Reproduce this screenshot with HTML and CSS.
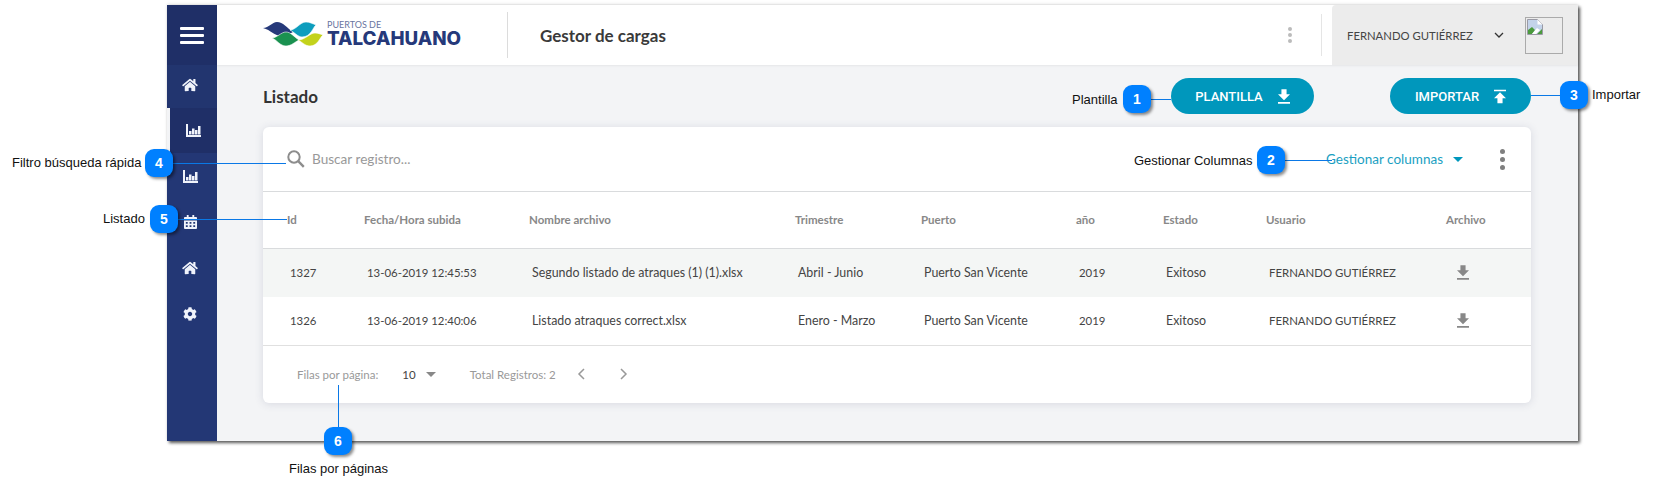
FILE: index.html
```html
<!DOCTYPE html>
<html>
<head>
    <meta charset="utf-8">
    <title>Gestor de cargas</title>
    <link rel="stylesheet" href="styles.css">
</head>
<body>
    <svg class="sprite" width="0" height="0">
        <symbol id="i-home" viewBox="0 0 576 512"><path d="M280.37 148.26L96 300.11V464a16 16 0 0 0 16 16l112.06-.29a16 16 0 0 0 15.92-16V368a16 16 0 0 1 16-16h64a16 16 0 0 1 16 16v95.64a16 16 0 0 0 16 16.05L464 480a16 16 0 0 0 16-16V300L295.67 148.26a12.19 12.19 0 0 0-15.3 0zM571.6 251.47L488 182.56V44.05a12 12 0 0 0-12-12h-56a12 12 0 0 0-12 12v72.61L318.47 43a48 48 0 0 0-61 0L4.34 251.47a12 12 0 0 0-1.6 16.9l25.5 31A12 12 0 0 0 45.15 301l235.22-193.74a12.19 12.19 0 0 1 15.3 0L530.9 301a12 12 0 0 0 16.9-1.6l25.5-31a12 12 0 0 0-1.7-16.93z"/></symbol>
        <symbol id="i-chart" viewBox="0 0 15 13"><path d="M0 0h2v11h13v2H0zM3 7h2.500v3.500H3zM6 4.500h2.500v6H6zM9 6h2.500v4.500H9zM12 2h2.500v8.500H12z"/></symbol>
        <symbol id="i-cal" viewBox="0 0 14 15"><path d="M3 0h2v2h4V0h2v2h2a1 1 0 0 1 1 1v2H0V3a1 1 0 0 1 1-1h2zM0 6h14v8a1 1 0 0 1-1 1H1a1 1 0 0 1-1-1zm2 1.5v2h2v-2zm4 0v2h2v-2zm4 0v2h2v-2zm-8 3.5v2h2v-2zm4 0v2h2v-2zm4 0v2h2v-2z" fill-rule="evenodd"/></symbol>
        <symbol id="i-gear" viewBox="0 0 512 512"><path d="M487.4 315.7l-42.6-24.6c4.3-23.2 4.3-47 0-70.2l42.6-24.6c4.9-2.8 7.1-8.6 5.5-14-11.1-35.6-30-67.8-54.7-94.6-3.8-4.1-10-5.1-14.8-2.3L380.8 110c-17.9-15.4-38.5-27.3-60.8-35.1V25.8c0-5.6-3.9-10.5-9.4-11.7-36.7-8.2-74.3-7.8-109.2 0-5.5 1.2-9.4 6.1-9.4 11.7V75c-22.2 7.9-42.8 19.8-60.8 35.1L88.7 85.5c-4.9-2.8-11-1.9-14.8 2.3-24.7 26.7-43.6 58.9-54.7 94.6-1.7 5.4.6 11.2 5.5 14L67.3 221c-4.3 23.2-4.3 47 0 70.2l-42.6 24.6c-4.9 2.8-7.1 8.6-5.5 14 11.1 35.6 30 67.8 54.7 94.6 3.8 4.1 10 5.1 14.8 2.3l42.6-24.6c17.9 15.4 38.5 27.3 60.8 35.1v49.2c0 5.6 3.9 10.5 9.4 11.7 36.7 8.2 74.3 7.8 109.2 0 5.5-1.2 9.4-6.1 9.4-11.7v-49.2c22.2-7.9 42.8-19.8 60.8-35.1l42.6 24.6c4.9 2.8 11 1.9 14.8-2.3 24.7-26.7 43.6-58.9 54.7-94.6 1.5-5.5-.7-11.3-5.6-14.1zM256 336c-44.1 0-80-35.9-80-80s35.9-80 80-80 80 35.9 80 80-35.9 80-80 80z"/></symbol>
        <symbol id="i-down" viewBox="5 3 14 17"><path d="M19 9h-4V3H9v6H5l7 7 7-7zM5 18v2h14v-2H5z"/></symbol>
        <symbol id="i-up" viewBox="5 4 14 16"><path d="M5 4v2h14V4H5zm0 10h4v6h6v-6h4l-7-7-7 7z"/></symbol>
    </svg>

    <div class="app">
        <nav class="sidebar">
            <div class="menu-btn"><span></span><span></span><span></span></div>
            <a class="nav-item nav-home"><svg class="ico-home"><use href="#i-home"/></svg></a>
            <a class="nav-item nav-active"><svg class="ico-chart"><use href="#i-chart"/></svg></a>
            <a class="nav-item"><svg class="ico-chart"><use href="#i-chart"/></svg></a>
            <a class="nav-item"><svg class="ico-cal"><use href="#i-cal"/></svg></a>
            <a class="nav-item"><svg class="ico-home"><use href="#i-home"/></svg></a>
            <a class="nav-item"><svg class="ico-gear"><use href="#i-gear"/></svg></a>
        </nav>

        <div class="main">
            <header class="topbar">
                <div class="logo">
                    <svg class="logo-waves" viewBox="0 0 62 26">
                        <path fill="#26397a" d="M0 8C6 8 9 2 14 2C20 2 24 8 30 12C26 14 23 16 19 16C11 16 8 10 0 8z"/>
                        <path fill="#0d9dbd" stroke="#fff" stroke-width=".6" d="M27 10C33 10 37 2 43 2C47 2 50 4 53 5C50 7 48 17 39 17C35 17 31 12 27 10z"/>
                        <path fill="#1a9150" stroke="#fff" stroke-width=".6" d="M9 18C14 18 18 12 23 12C28 12 31 17 36 20C32 22 28 26 23 26C17 26 14 20 9 18z"/>
                        <path fill="#c3d21b" stroke="#fff" stroke-width=".6" d="M35 20C42 20 47 13 52 13C55 13 57 14 60 15C57 17 55 26 47 26C42 26 39 22 35 20z"/>
                    </svg>
                    <div class="logo-text">
                        <span class="logo-small">PUERTOS DE</span>
                        <span class="logo-big">TALCAHUANO</span>
                    </div>
                </div>
                <div class="app-title">Gestor de cargas</div>
                <div class="top-kebab"><span></span><span></span><span></span></div>
                <div class="top-sep"></div>
                <div class="user-box">
                    <span class="user-name">FERNANDO GUTIÉRREZ</span>
                    <svg class="user-chevron" viewBox="0 0 10 6"><path d="M1 1l4 4 4-4" fill="none" stroke="#333" stroke-width="1.3"/></svg>
                    <div class="avatar">
                        <svg class="broken-img" viewBox="0 0 16 16">
                            <path fill="#c3d3ea" stroke="#9a9aa5" stroke-width="1" d="M.5.5h10l5 5v10H.5z"/>
                            <path fill="#4b9a3d" d="M1 15V11l4-3 3 3-3 4zM10 15l5-5v5z"/>
                            <path fill="#fff" d="M5 15l5-6 3 2-4 4zM10.500.5v5h5z"/>
                        </svg>
                    </div>
                </div>
            </header>

            <section class="content">
                <div class="page-head">
                    <h1 class="page-title">Listado</h1>
                    <button class="btn btn-plantilla">PLANTILLA <svg class="btn-ico"><use href="#i-down"/></svg></button>
                    <button class="btn btn-importar">IMPORTAR <svg class="btn-ico"><use href="#i-up"/></svg></button>
                </div>

                <div class="card">
                    <div class="toolbar">
                        <svg class="search-ico" viewBox="0 0 18 18"><circle cx="7" cy="7" r="5.7" fill="none" stroke="#8d8d8d" stroke-width="2"/><path d="M11.200 11.200l5.600 5.600" stroke="#8d8d8d" stroke-width="2.400"/></svg>
                        <span class="search-text">Buscar registro...</span>
                        <span class="columns-link">Gestionar columnas</span>
                        <span class="columns-caret"></span>
                        <div class="card-kebab"><span></span><span></span><span></span></div>
                    </div>

                    <table class="grid">
                        <colgroup>
                            <col class="c-id"><col class="c-date"><col class="c-file"><col class="c-trim"><col class="c-port"><col class="c-year"><col class="c-state"><col class="c-user"><col class="c-arch">
                        </colgroup>
                        <thead>
                            <tr>
                                <th>Id</th><th>Fecha/Hora subida</th><th>Nombre archivo</th><th>Trimestre</th><th>Puerto</th><th>año</th><th>Estado</th><th>Usuario</th><th>Archivo</th>
                            </tr>
                        </thead>
                        <tbody>
                            <tr class="row-alt">
                                <td class="tight">1327</td><td class="tight">13-06-2019 12:45:53</td><td>Segundo listado de atraques (1) (1).xlsx</td><td>Abril - Junio</td><td>Puerto San Vicente</td><td class="tight">2019</td><td>Exitoso</td><td class="tight">FERNANDO GUTIÉRREZ</td>
                                <td><svg class="dl-ico"><use href="#i-down"/></svg></td>
                            </tr>
                            <tr>
                                <td class="tight">1326</td><td class="tight">13-06-2019 12:40:06</td><td>Listado atraques correct.xlsx</td><td>Enero - Marzo</td><td>Puerto San Vicente</td><td class="tight">2019</td><td>Exitoso</td><td class="tight">FERNANDO GUTIÉRREZ</td>
                                <td><svg class="dl-ico"><use href="#i-down"/></svg></td>
                            </tr>
                        </tbody>
                    </table>

                    <div class="pager">
                        <span class="pager-label">Filas por página:</span>
                        <span class="pager-size">10</span>
                        <span class="pager-caret"></span>
                        <span class="pager-total">Total Registros: 2</span>
                        <svg class="pager-arrow pager-prev" viewBox="0 0 8 12"><path d="M7 1L2 6l5 5" fill="none" stroke="#999" stroke-width="1.500"/></svg>
                        <svg class="pager-arrow pager-next" viewBox="0 0 8 12"><path d="M1 1l5 5-5 5" fill="none" stroke="#999" stroke-width="1.500"/></svg>
                    </div>
                </div>
            </section>
        </div>
    </div>

    <!-- callouts over the screenshot -->
    <span class="line line-1"></span>
    <span class="line line-2"></span>
    <span class="line line-3"></span>
    <span class="line line-4"></span>
    <span class="line line-5"></span>
    <span class="line line-6"></span>
    <span class="bubble bubble-1">1</span>
    <span class="bubble bubble-2">2</span>
    <span class="bubble bubble-3">3</span>
    <span class="bubble bubble-4">4</span>
    <span class="bubble bubble-5">5</span>
    <span class="bubble bubble-6">6</span>
    <span class="note note-1">Plantilla</span>
    <span class="note note-2">Gestionar Columnas</span>
    <span class="note note-3">Importar</span>
    <span class="note note-4">Filtro búsqueda rápida</span>
    <span class="note note-5">Listado</span>
    <span class="note note-6">Filas por páginas</span>
</body>
</html>
```

FILE: styles.css
```css
html, body {
    margin: 0;
    padding: 0;
    background: #fff;
}
body {
    position: relative;
    width: 1656px;
    height: 492px;
    overflow: hidden;
    font-family: "Lato", "Noto Sans", sans-serif;
    color: #333;
}
.sprite {
    position: absolute;
}
.app {
    display: flex;
    width: 1411px;
    height: 436px;
    margin: 5px 0 0 167px;
    background: #f3f4f6;
    box-shadow: 2px 2px 3px rgba(0, 0, 0, 0.65), 0 -1px 3px rgba(0, 0, 0, 0.1);
}

/* sidebar */
.sidebar {
    width: 50px;
    flex: none;
    background: #233775;
    color: #f0f3fb;
}
.menu-btn {
    height: 60px;
    background: #1f2f67;
    display: flex;
    flex-direction: column;
    align-items: center;
    justify-content: center;
    gap: 4px;
    box-sizing: border-box;
}
.menu-btn span {
    width: 24px;
    height: 3px;
    background: #fff;
    border-radius: 1px;
}
.nav-item {
    display: flex;
    height: 46px;
    align-items: center;
    justify-content: center;
    padding-right: 4px;
    box-sizing: border-box;
}
.nav-home {
    height: 43px;
    padding-bottom: 3px;
    background: #22356f;
}
.nav-active {
    height: 45px;
    background: #1f2f67;
    border-left: 3px solid #f3f4f6;
    padding-right: 1px;
}
.nav-item svg {
    fill: currentColor;
}
.ico-home {
    width: 16px;
    height: 14px;
}
.ico-chart {
    width: 15px;
    height: 13px;
}
.ico-cal {
    width: 13px;
    height: 14px;
}
.ico-gear {
    width: 14px;
    height: 14px;
}

/* top bar */
.main {
    flex: 1;
    display: flex;
    flex-direction: column;
    min-width: 0;
}
.topbar {
    height: 60px;
    flex: none;
    display: flex;
    align-items: center;
    background: #fff;
    box-shadow: 0 1px 2px rgba(0, 0, 0, 0.06);
    position: relative;
}
.logo {
    width: 244px;
    height: 46px;
    margin-left: 46px;
    display: flex;
    align-items: center;
    gap: 2px;
    border-right: 1px solid #dcdcdc;
}
.logo-waves {
    width: 62px;
    height: 26px;
    margin-bottom: 4px;
}
.logo-text {
    display: flex;
    flex-direction: column;
    color: #26397a;
}
.logo-small {
    font-size: 9px;
    line-height: 7px;
    font-weight: 400;
    color: #6a75a0;
}
.logo-big {
    font-family: "Inter", sans-serif;
    font-size: 18.8px;
    line-height: 21px;
    font-weight: 800;
}
.app-title {
    margin-left: 32px;
    font-size: 17px;
    font-weight: 700;
    color: #3a3a3a;
}
.top-kebab {
    margin-left: auto;
    margin-right: 29px;
    display: flex;
    flex-direction: column;
    gap: 2px;
}
.top-kebab span {
    width: 4px;
    height: 4px;
    border-radius: 50%;
    background: #bbb;
}
.top-sep {
    width: 1px;
    height: 42px;
    margin-right: 10px;
    background: #e5e5e5;
}
.user-box {
    width: 246px;
    height: 60px;
    box-sizing: border-box;
    display: flex;
    align-items: center;
    padding-left: 15px;
    background: #ececec;
    border-top-left-radius: 4px;
}
.user-name {
    font-size: 11.3px;
    color: #444;
    width: 147px;
    white-space: nowrap;
}
.user-chevron {
    width: 10px;
    height: 6px;
}
.avatar {
    width: 38px;
    height: 37px;
    margin-left: 21px;
    border: 1px solid #aaa;
    box-sizing: border-box;
    position: relative;
}
.broken-img {
    position: absolute;
    left: 1px;
    top: 1px;
    width: 16px;
    height: 16px;
}

/* content */
.content {
    flex: 1;
    padding: 0 47px 0 46px;
    min-height: 0;
}
.page-head {
    height: 62px;
    display: flex;
    align-items: center;
}
.page-title {
    margin: 0 auto 0 0;
    font-size: 17px;
    font-weight: 700;
    color: #333;
}
.btn {
    height: 36px;
    width: 143px;
    border: 0;
    border-radius: 18px;
    background: #0097bc;
    color: #fff;
    font-family: "Roboto", sans-serif;
    font-size: 13px;
    font-weight: 500;
    display: flex;
    align-items: center;
    justify-content: center;
    gap: 15px;
    padding: 0;
}
.btn-importar {
    width: 141px;
    margin-left: 76px;
}
.btn-ico {
    width: 12px;
    height: 15px;
    fill: #fff;
}
.card {
    height: 276px;
    background: #fff;
    border-radius: 6px;
    box-shadow: 0 1px 8px rgba(60, 70, 110, 0.15);
}
.toolbar {
    height: 64px;
    display: flex;
    align-items: center;
    border-bottom: 1px solid #d9dbdd;
    padding: 0 24px;
}
.search-ico {
    width: 18px;
    height: 18px;
}
.search-text {
    margin-left: 7px;
    font-size: 13.6px;
    color: #999;
}
.columns-link {
    margin-left: auto;
    font-size: 13.5px;
    color: #1b9fc2;
}
.columns-caret {
    margin-left: 10px;
    border-left: 5px solid transparent;
    border-right: 5px solid transparent;
    border-top: 5px solid #0097bc;
}
.card-kebab {
    margin-left: 37px;
    margin-right: 2px;
    display: flex;
    flex-direction: column;
    gap: 3px;
}
.card-kebab span {
    width: 5px;
    height: 5px;
    border-radius: 50%;
    background: #7f7f7f;
}

/* table */
.grid {
    width: 100%;
    border-collapse: collapse;
    table-layout: fixed;
}
.c-id { width: 77px; }
.c-date { width: 165px; }
.c-file { width: 266px; }
.c-trim { width: 126px; }
.c-port { width: 155px; }
.c-year { width: 87px; }
.c-state { width: 103px; }
.c-user { width: 180px; }
.grid th {
    height: 55px;
    padding: 0 0 1px 24px;
    text-align: left;
    font-size: 11.5px;
    font-weight: 700;
    color: #888;
    border-bottom: 1px solid #d9dbdd;
}
.grid td {
    height: 47px;
    padding: 0 0 1px 27px;
    font-size: 12.4px;
    color: #444;
    white-space: nowrap;
}
.grid td.tight {
    font-size: 11.4px;
}
.grid tbody tr:last-child td {
    border-bottom: 1px solid #e0e0e0;
}
.row-alt td {
    background: #f4f6f5;
}
.dl-ico {
    width: 12px;
    height: 15px;
    fill: #888;
    display: block;
    margin-left: 8px;
}

/* pager */
.pager {
    height: 58px;
    box-sizing: border-box;
    padding: 0 0 2px 34px;
    display: flex;
    align-items: center;
    font-size: 11.5px;
    color: #999;
}
.pager-size {
    margin-left: 24px;
    color: #444;
}
.pager-caret {
    margin-left: 10px;
    border-left: 5px solid transparent;
    border-right: 5px solid transparent;
    border-top: 5px solid #888;
}
.pager-total {
    margin-left: 34px;
}
.pager-arrow {
    width: 8px;
    height: 12px;
}
.pager-prev {
    margin-left: 21px;
}
.pager-next {
    margin-left: 35px;
}

/* callouts */
.bubble {
    position: absolute;
    width: 28px;
    height: 28px;
    border-radius: 9px;
    background: #0080ff;
    color: #fff;
    font-family: "Liberation Sans", Arial, sans-serif;
    font-size: 14px;
    font-weight: 700;
    line-height: 28px;
    text-align: center;
    box-shadow: 2px 2px 3px rgba(0, 0, 0, 0.45);
}
.bubble-1 { left: 1123px; top: 85px; }
.bubble-2 { left: 1257px; top: 146px; }
.bubble-3 { left: 1560px; top: 81px; }
.bubble-4 { left: 145px; top: 149px; }
.bubble-5 { left: 150px; top: 205px; }
.bubble-6 { left: 324px; top: 427px; }
.line {
    position: absolute;
    background: #0a78e6;
}
.line-1 { left: 1151px; top: 99px; width: 20px; height: 1px; }
.line-2 { left: 1285px; top: 160px; width: 47px; height: 1px; }
.line-3 { left: 1531px; top: 95px; width: 29px; height: 1px; }
.line-4 { left: 173px; top: 163px; width: 113px; height: 1px; }
.line-5 { left: 178px; top: 219px; width: 109px; height: 1px; }
.line-6 { left: 338px; top: 385px; width: 1px; height: 42px; }
.note {
    position: absolute;
    font-family: "Liberation Sans", Arial, sans-serif;
    font-size: 13px;
    line-height: 14px;
    color: #111;
    white-space: nowrap;
}
.note-1 { left: 1072px; top: 93px; }
.note-2 { left: 1134px; top: 154px; }
.note-3 { left: 1592px; top: 88px; }
.note-4 { left: 12px; top: 156px; }
.note-5 { left: 103px; top: 212px; }
.note-6 { left: 289px; top: 462px; }
```
